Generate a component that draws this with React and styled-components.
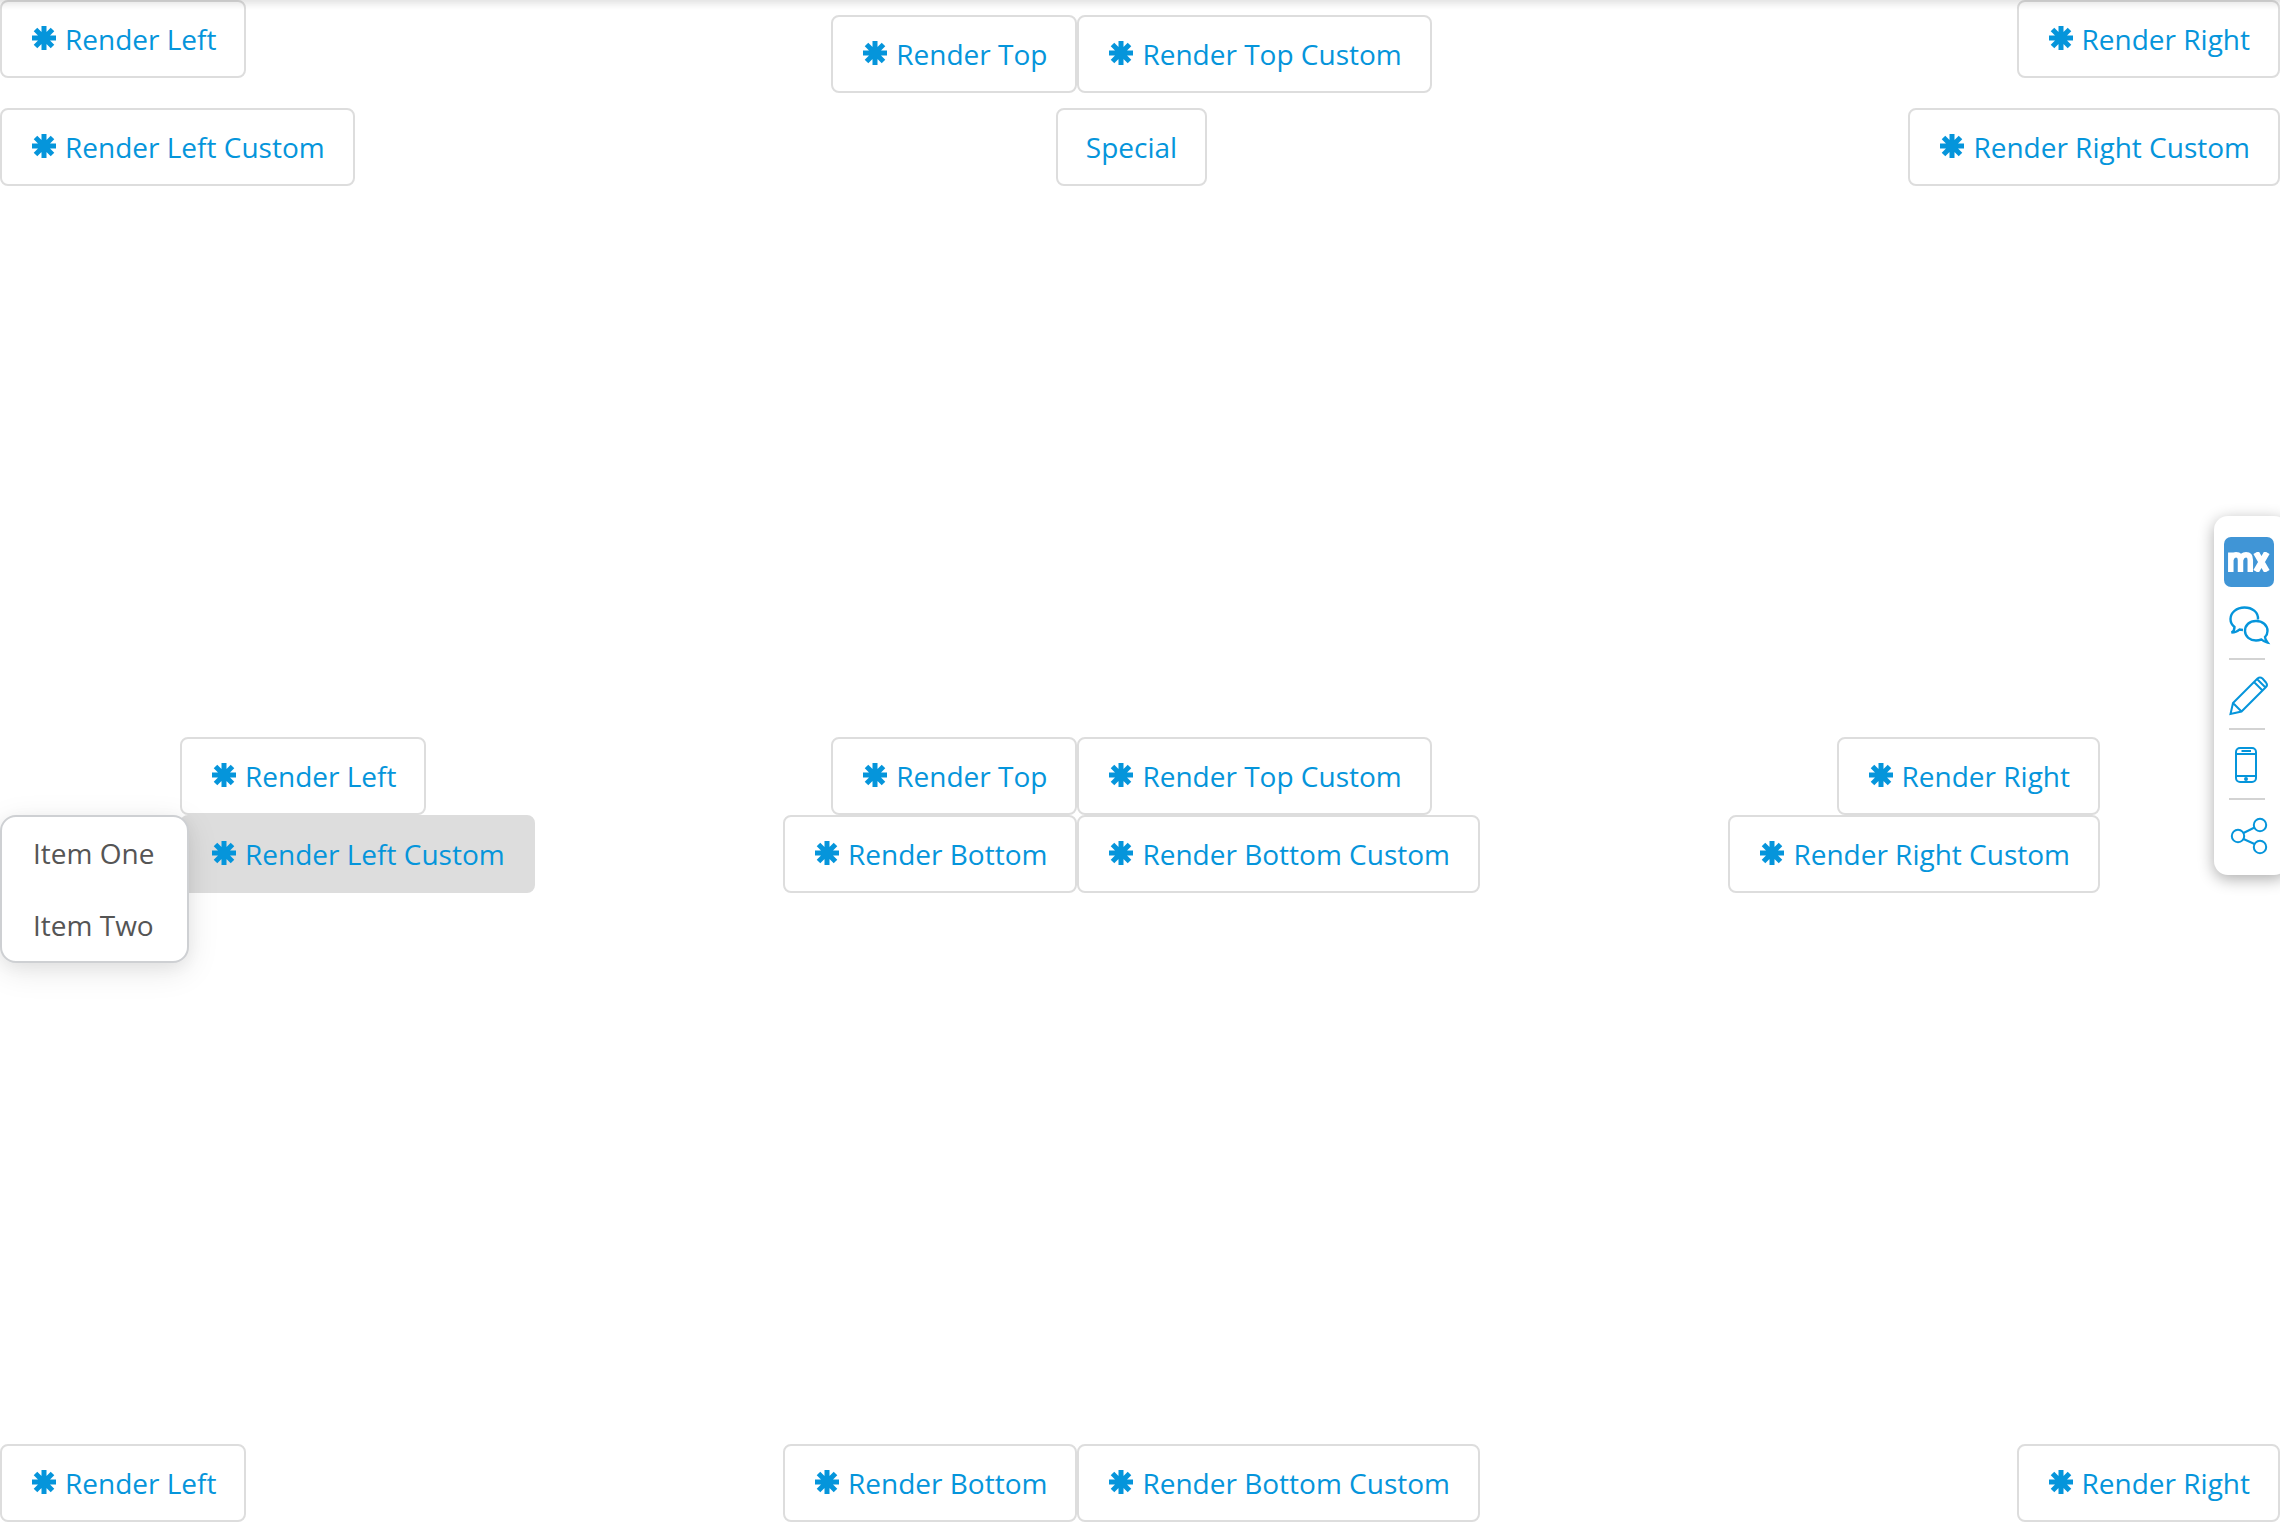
import React from "react";
import styled, { createGlobalStyle, css } from "styled-components";

const blue = "#0595db";

const GlobalStyle = createGlobalStyle`
  *, *::before, *::after { box-sizing: border-box; }
  body {
    margin: 0;
    background: #fff;
    color: #555;
    font-family: "Open Sans", sans-serif;
    font-size: 28px;
    line-height: 40px;
    overflow: hidden;
  }
`;

const Page = styled.main`
  display: flex;
  flex-direction: column;
  justify-content: space-between;
  min-height: 100vh;
`;

const TopShadow = styled.div`
  position: fixed;
  inset: 0 0 auto;
  height: 10px;
  background: linear-gradient(rgba(0, 0, 0, 0.1), rgba(0, 0, 0, 0.03) 60%, transparent);
  pointer-events: none;
  z-index: 2;
`;

const Section = styled.section`
  display: flex;
  padding: 0 ${(p) => (p.$inset ? "180px" : "0")};
`;

const Column = styled.div`
  display: flex;
  flex-direction: column;
  align-items: ${(p) => p.$align || "flex-start"};
  gap: ${(p) => p.$gap || 0}px;
  padding-top: ${(p) => p.$top || 0}px;
  ${(p) => p.$grow && css`flex: 1;`}
`;

const Group = styled.div`
  display: flex;
`;

const Anchor = styled.div`
  position: relative;
`;

const Button = styled.button`
  display: flex;
  align-items: center;
  gap: 9px;
  padding: 17px 28px;
  border: 2px solid #ddd;
  border-radius: 8px;
  background: ${(p) => (p.$active ? "#ddd" : "#fff")};
  color: ${blue};
  font: inherit;
  white-space: nowrap;
  cursor: pointer;
`;

const Glyph = styled.svg`
  width: 26px;
  height: 26px;
  margin-bottom: 3px;
  stroke: currentColor;
  stroke-width: 5;
`;

const Menu = styled.ul`
  position: absolute;
  top: 0;
  right: 100%;
  width: 189px;
  margin: 0 -9px 0 0;
  padding: 0;
  list-style: none;
  background: #fff;
  border: 2px solid #ced0d3;
  border-radius: 16px;
  box-shadow: 0 8px 32px rgba(0, 0, 0, 0.1), 0 4px 16px rgba(0, 0, 0, 0.05);
  z-index: 1;
`;

const MenuItem = styled.button`
  display: block;
  width: 100%;
  padding: 16px 31px;
  border: 0;
  background: none;
  color: #555;
  font: inherit;
  text-align: left;
  white-space: nowrap;
`;

const Toolbar = styled.nav`
  position: fixed;
  top: 516px;
  right: -8px;
  display: flex;
  flex-direction: column;
  width: 74px;
  padding: 21px 0 6px 10px;
  background: #fff;
  border-radius: 14px;
  box-shadow: 0 4px 16px rgba(0, 0, 0, 0.33);
  z-index: 1;
`;

const Logo = styled.a`
  display: flex;
  justify-content: center;
  align-items: center;
  width: 50px;
  height: 50px;
  border-radius: 7px;
  background: #4095d6;
`;

const Tool = styled.button`
  display: flex;
  align-items: center;
  height: 70px;
  width: 50px;
  padding: 0 5px;
  border: 0;
  background: none;
  color: ${blue};
`;

const Tools = styled.div`
  display: flex;
  flex-direction: column;
  padding-top: 2px;
`;

const Divider = styled.hr`
  width: 36px;
  height: 2px;
  margin: -1px 0 -1px 5px;
  border: 0;
  background: #d3d3d3;
`;

const ToolIcon = styled.svg`
  width: 40px;
  height: 40px;
  flex: none;
  fill: none;
  stroke: currentColor;
  stroke-width: 2;
  overflow: visible;
`;

const Asterisk = () => (
  <Glyph viewBox="0 0 26 26" aria-hidden="true">
    <path d="M14 1v24M2 13h24M5.500 4.500l17 17M22.500 4.500l-17 17" />
  </Glyph>
);

const RenderButton = ({ children, active }) => (
  <Button type="button" $active={active}>
    <Asterisk />
    {children}
  </Button>
);

const MxLogo = () => (
  <svg width="42" height="20" viewBox="0 0 42 20" fill="none" stroke="#fff" aria-hidden="true">
    <path strokeWidth="5.500" d="M2.800 20V.5M2.800 8Q4 2.800 8 2.800Q12.500 2.800 12.500 8V20M12.500 8Q14 2.800 18 2.800Q22.300 2.800 22.300 8V20" />
    <path strokeWidth="6" d="M28 .5L39 19.500M39 .5L28 19.500" />
  </svg>
);

const tools = [
  {
    label: "Comments",
    icon: (
      <path
        strokeWidth="2.400"
        d="M29 15.500C29.500 8 23 3.500 15.500 3.500C7.500 3.500 1.500 8.500 1.500 15C1.500 18.500 3 21 5.500 23C5.500 25.500 4.500 27.500 2.500 28.500C6 28.500 8.500 27.500 10.500 25.500L14 26M27 17C20.500 17 16 21 16 27C16 32.500 21 36.500 27 36.500C29 36.500 31 36 32.500 35.500C34 37 36 38 38.500 38.500C37 36.500 36 35 36 33C37.500 31.500 38.500 29.500 38.500 27C38.500 21 33.500 17 27 17Z"
      />
    ),
  },
  {
    label: "Edit",
    icon: (
      <path d="M1.500 40L4 29L28.500 4.500Q31 2.500 33.500 4.500L37 8.500Q39 11 37 13L12.500 37.500ZM4 29L12.500 37.500M25 8L33.500 16.500M28 5L36.500 13.500" />
    ),
  },
  {
    label: "Device",
    icon: (
      <>
        <rect x="7" y="4" width="20" height="34" rx="4" />
        <path d="M7 10H27M7 32H27M12.500 7H22" />
        <circle cx="17" cy="35" r="1" />
      </>
    ),
  },
  {
    label: "Share",
    icon: (
      <>
        <circle cx="9" cy="22" r="6.200" />
        <circle cx="31" cy="11" r="6.200" />
        <circle cx="31" cy="33" r="6.200" />
        <path d="M14.500 19L25.500 13.500M14.500 25L25.500 30" />
      </>
    ),
  },
];

export default function App() {
  return (
    <>
      <GlobalStyle />
      <TopShadow />
      <Page>
        <Section>
          <Column $gap={30}>
            <RenderButton>Render Left</RenderButton>
            <RenderButton>Render Left Custom</RenderButton>
          </Column>
          <Column $grow $align="center" $gap={15} $top={15}>
            <Group>
              <RenderButton>Render Top</RenderButton>
              <RenderButton>Render Top Custom</RenderButton>
            </Group>
            <Button type="button">Special</Button>
          </Column>
          <Column $align="flex-end" $gap={30}>
            <RenderButton>Render Right</RenderButton>
            <RenderButton>Render Right Custom</RenderButton>
          </Column>
        </Section>

        <Section $inset>
          <Column>
            <RenderButton>Render Left</RenderButton>
            <Anchor>
              <RenderButton active>Render Left Custom</RenderButton>
              <Menu>
                <li><MenuItem type="button">Item One</MenuItem></li>
                <li><MenuItem type="button">Item Two</MenuItem></li>
              </Menu>
            </Anchor>
          </Column>
          <Column $grow $align="center">
            <Group>
              <RenderButton>Render Top</RenderButton>
              <RenderButton>Render Top Custom</RenderButton>
            </Group>
            <Group>
              <RenderButton>Render Bottom</RenderButton>
              <RenderButton>Render Bottom Custom</RenderButton>
            </Group>
          </Column>
          <Column $align="flex-end">
            <RenderButton>Render Right</RenderButton>
            <RenderButton>Render Right Custom</RenderButton>
          </Column>
        </Section>

        <Section>
          <RenderButton>Render Left</RenderButton>
          <Column $grow $align="center">
            <Group>
              <RenderButton>Render Bottom</RenderButton>
              <RenderButton>Render Bottom Custom</RenderButton>
            </Group>
          </Column>
          <RenderButton>Render Right</RenderButton>
        </Section>
      </Page>

      <Toolbar aria-label="Feedback tools">
        <Logo href="#" aria-label="Mendix"><MxLogo /></Logo>
        <Tools>
          {tools.map(({ label, icon }, i) => (
            <React.Fragment key={label}>
              {i > 0 && <Divider />}
              <Tool type="button" aria-label={label}>
                <ToolIcon viewBox="0 0 40 40">{icon}</ToolIcon>
              </Tool>
            </React.Fragment>
          ))}
        </Tools>
      </Toolbar>
    </>
  );
}
